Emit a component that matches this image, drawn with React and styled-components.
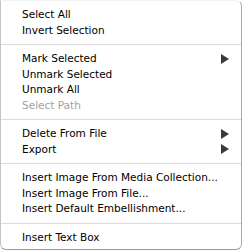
import styled, { createGlobalStyle } from 'styled-components';

const GlobalStyle = createGlobalStyle`
  html, body {
    margin: 0;
    padding: 0;
    background: #fff;
  }
`;

const groups = [
  [
    { label: 'Select All' },
    { label: 'Invert Selection' },
  ],
  [
    { label: 'Mark Selected', submenu: true },
    { label: 'Unmark Selected' },
    { label: 'Unmark All' },
    { label: 'Select Path', disabled: true },
  ],
  [
    { label: 'Delete From File', submenu: true },
    { label: 'Export', submenu: true },
  ],
  [
    { label: 'Insert Image From Media Collection...' },
    { label: 'Insert Image From File...' },
    { label: 'Insert Default Embellishment...' },
  ],
  [{ label: 'Insert Text Box' }],
];

export default function App() {
  return (
    <>
      <GlobalStyle />
      <Menu>
        {groups.map((items, i) => (
          <Group key={i}>
            {i > 0 && <Separator />}
            {items.map((item) => (
              <Item key={item.label} $disabled={item.disabled}>
                <span>{item.label}</span>
                {item.submenu && (
                  <Arrow width='8' height='10' viewBox='0 0 8 10'>
                    <polygon points='0,0 8,5 0,10' fill='#3a3a3a' />
                  </Arrow>
                )}
              </Item>
            ))}
          </Group>
        ))}
      </Menu>
    </>
  );
}

const Menu = styled.div`
  box-sizing: border-box;
  width: 242px;
  height: 250px;
  padding-top: 6px;
  background: #fff;
  border: 1px solid #c4c4c4;
  border-top-color: #f4f4f4;
  border-right-color: #a9a9a9;
  border-bottom-color: #9a9a9a;
  border-radius: 0 6px 6px 6px;
  font-family: 'DejaVu Sans', sans-serif;
  font-size: 10.5px;
`;

const Group = styled.div`
  display: flex;
  flex-direction: column;
`;

const Separator = styled.div`
  height: 1px;
  margin: 6px 0 6px;
  background: #dadada;
`;

const Item = styled.div`
  display: flex;
  align-items: center;
  justify-content: space-between;
  height: 15.5px;
  line-height: 15.5px;
  padding: 0 12px 0 21px;
  color: ${(p) => (p.$disabled ? '#a2a2a2' : '#000')};
  white-space: nowrap;
`;

const Arrow = styled.svg`
  display: block;
`;
